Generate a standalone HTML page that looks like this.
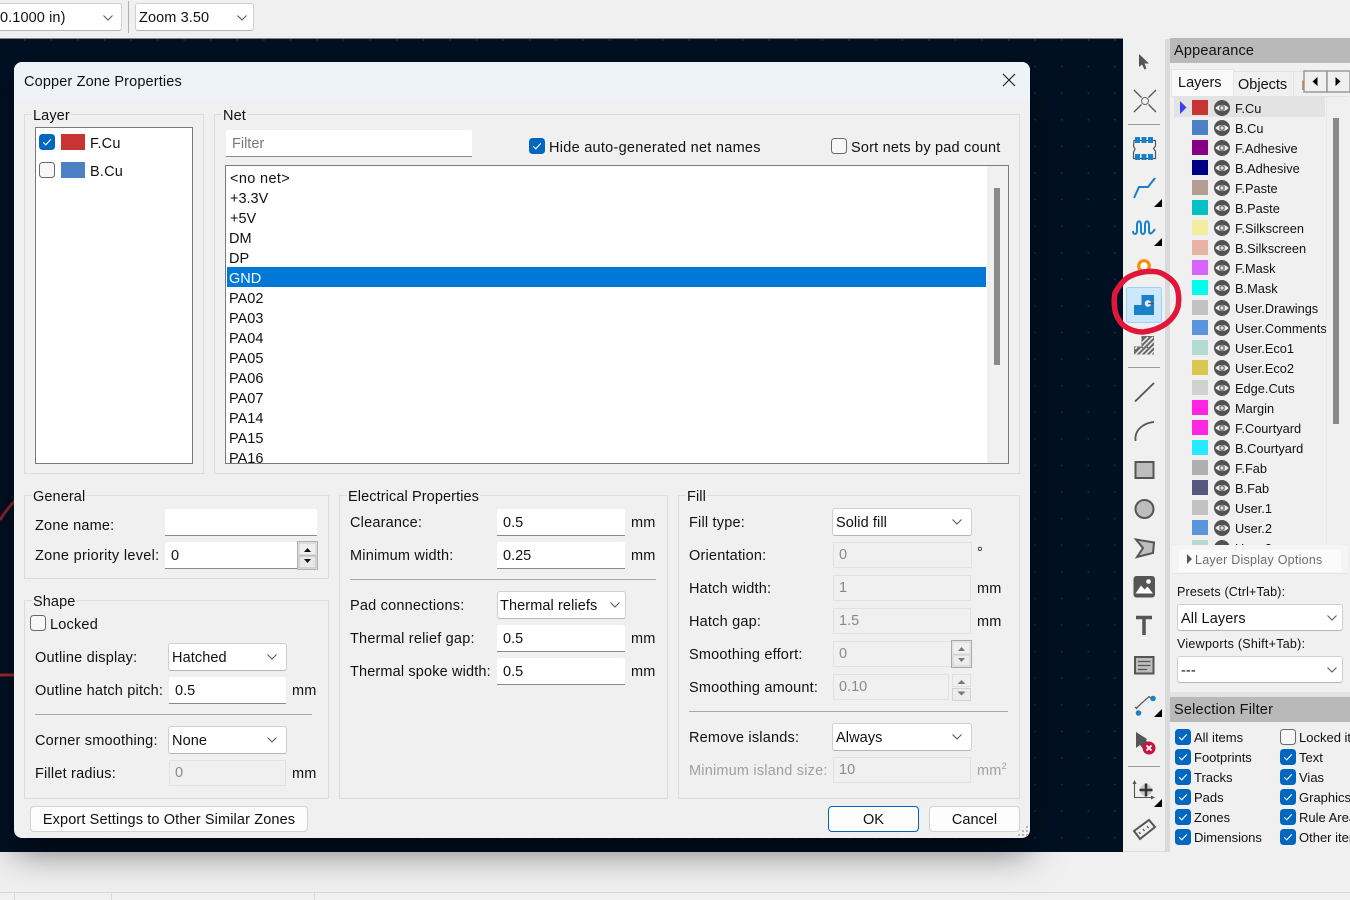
<!DOCTYPE html>
<html><head><meta charset="utf-8"><style>
html,body{margin:0;padding:0;width:1350px;height:900px;overflow:hidden;background:#f0f0f0;font-family:"Liberation Sans",sans-serif;color:#111}
div{box-sizing:border-box}
.a{position:absolute}
.t{position:absolute;white-space:nowrap;line-height:26px;font-size:14.5px;letter-spacing:.2px}
.g{position:absolute;border:1px solid #dcdcdc}
.gl{position:absolute;background:#f0f0f0;padding:0 1px 0 1px;line-height:18px;height:16px;font-size:14.5px;white-space:nowrap;letter-spacing:.1px}
.i{position:absolute;background:#fff;border-bottom:1px solid #8a8a8a;border-radius:2px 2px 0 0;font-size:14.5px;line-height:28px;padding-left:6px;white-space:nowrap}
.d{position:absolute;background:#f0f0f0;border:1px solid #e2e2e2;color:#8a8a8a;font-size:14.5px;line-height:25px;padding-left:5px}
.s{position:absolute;background:#fff;border:1px solid #cfcfcf;border-bottom-color:#b5b5b5;border-radius:3px;font-size:14.5px;line-height:28px;padding-left:3px;white-space:nowrap;letter-spacing:.1px}
.s svg{position:absolute;right:9px;top:10px}
.c{position:absolute;width:16px;height:16px}
.h{position:absolute;height:1px;background:#a8a8a8}
.r{position:absolute;left:1174px;height:20px;width:152px}
.r .w{position:absolute;left:18px;top:3px;width:16px;height:15px}
.r svg{position:absolute;left:40px;top:3px;width:16px;height:16px}
.r span{position:absolute;left:61px;top:0;line-height:23px;font-size:12.8px;white-space:nowrap}
.n{position:absolute;left:229px;font-size:14.5px;line-height:26px;white-space:nowrap}
.f{position:absolute;font-size:13px;line-height:20px;white-space:nowrap}
</style></head><body>
<svg width="0" height="0" style="position:absolute"><defs>
<symbol id="eye" viewBox="0 0 16 16"><circle cx="8" cy="8" r="8" fill="#525252"/><path d="M1.2 8Q8 1.800 14.800 8Q8 14.200 1.200 8Z" fill="#f0f0f0"/><circle cx="8" cy="8" r="3" fill="#7a7a7a"/><circle cx="8" cy="8" r="1.500" fill="#e4e4e4"/></symbol>
<symbol id="on" viewBox="0 0 16 16"><rect width="16" height="16" rx="3.5" fill="#0067c0"/><path d="M4.2 8.3l2.6 2.5 5-5.4" fill="none" stroke="#fff" stroke-width="1.1"/></symbol>
<symbol id="off" viewBox="0 0 16 16"><rect x=".5" y=".5" width="15" height="15" rx="3" fill="#f7f7f7" stroke="#6a6a6a"/></symbol>
<symbol id="chev" viewBox="0 0 10 6"><path d="M.5.5L5 5 9.5.5" fill="none" stroke="#555" stroke-width="1"/></symbol>
</defs></svg>

<!-- top toolbar -->
<div class="a" style="left:0;top:0;width:1350px;height:38px;background:#f0f0f0"></div>
<div class="s" style="left:-7px;top:3px;width:129px;height:28px;padding-left:6px;border-radius:3px">0.1000 in)<svg width="10" height="6" style="right:8px;top:11px"><use href="#chev"/></svg></div>
<div class="a" style="left:128px;top:1px;width:1px;height:32px;background:#b0b0b0"></div>
<div class="s" style="left:135px;top:3px;width:119px;height:28px">Zoom 3.50<svg width="10" height="6" style="right:6px;top:11px"><use href="#chev"/></svg></div>

<!-- canvas -->
<div class="a" style="left:0;top:38px;width:1123px;height:814px;background-color:#001023;border-top:1px solid #888;background-image:radial-gradient(circle at 1px 1px,#202b3a 0.8px,transparent 1px);background-size:26.6px 26.6px;background-position:-3px 0"></div>
<svg class="a" style="left:0;top:480px" width="40" height="210"><path d="M0 40Q8 27 16 20" stroke="#8f2430" stroke-width="3" fill="none"/><path d="M0 195H16" stroke="#a52a32" stroke-width="3" fill="none"/></svg>

<!-- bottom -->
<div class="a" style="left:0;top:892px;width:1350px;height:1px;background:#d8d8d8"></div>
<div class="a" style="left:14px;top:892px;width:1px;height:8px;background:#d8d8d8"></div>
<div class="a" style="left:111px;top:892px;width:1px;height:8px;background:#d8d8d8"></div>
<div class="a" style="left:314px;top:892px;width:1px;height:8px;background:#d8d8d8"></div>

<!-- right toolbar & panels -->
<div class="a" style="left:1123px;top:39px;width:42px;height:813px;background:#f0f0f0"></div>
<div class="a" style="left:1165px;top:39px;width:5px;height:813px;background:#dadada"></div>
<div class="a" style="left:1123px;top:851px;width:47px;height:1px;background:#dcdcdc"></div>

<svg class="a" style="left:1123px;top:39px;overflow:visible" width="47" height="813">
<g transform="translate(-1123,-39)">
<path d="M1139 54L1139 67 1142 64.500 1144.500 69.500 1146.500 68.500 1144.500 63.500 1149 63.500Z" fill="#555"/>
<path d="M1134 90L1141.500 97.500M1148.500 104.500L1156 112M1156 90L1148.500 97.500M1141.500 104.500L1134 112" stroke="#555" stroke-width="1.300"/><circle cx="1145" cy="101" r="3.500" fill="#f0f0f0" stroke="#666"/>
<path d="M1128 124.500H1160" stroke="#999"/>
<path d="M1134 140.500H1155.500V146L1153.500 148.500 1155.500 151V158.500H1133.500V152.500L1135 149 1133.500 146Z" fill="none" stroke="#555" stroke-width="1.200"/>
<path d="M1135 137h5v6h-5zM1141.500 137h5v6h-5zM1148 137h5v6h-5zM1135 154h5v6h-5zM1141.500 154h5v6h-5zM1148 154h5v6h-5z" fill="#1a81c8"/>
<path d="M1134 198L1139 187H1148L1155 178" fill="none" stroke="#1a81c8" stroke-width="2"/>
<path d="M1154 207L1162 199V207Z" fill="#000"/>
<path d="M1133 231C1133 235 1137 235 1137 231V225C1137 220 1141 220 1141 225V231C1141 235 1145 235 1145 231V225C1145 220 1149 220 1149 225V231C1149 235 1152 234 1155 229" fill="none" stroke="#1a81c8" stroke-width="2"/>
<path d="M1154 246L1162 238V246Z" fill="#000"/>
<circle cx="1144" cy="266" r="5.300" fill="#fff" stroke="#f39200" stroke-width="3.200"/>
<rect x="1126.500" y="287.500" width="35" height="35" rx="2" fill="#cce8ff" stroke="#99d1ff"/>
<path d="M1134 315V305H1141.500V295H1154V315Z" fill="#1a81c8"/>
<circle cx="1148" cy="303.500" r="3.200" fill="#e8f4fc"/><path d="M1148 303.500H1154" stroke="#555" stroke-width="1.500"/>
<path d="M1143 272C1150 271 1158 271 1163 274C1170 278 1175 282 1177 288C1179 294 1179 301 1178 307C1176 314 1172 319 1167 323C1160 328 1152 331 1143 332C1135 332 1128 329 1123 325C1119 321 1116 316 1115 310C1114 304 1114 298 1115 293C1118 287 1122 282 1127 278C1132 275 1137 273 1143 272Z" fill="none" stroke="#e0173a" stroke-width="5.500" stroke-linejoin="round"/>
<path d="M1134 354.500V346.500H1141.500V336H1154V354.500Z" fill="#6a6a6a"/>
<path d="M1135 349L1137 347M1135 355L1142 348M1140 355L1147 348M1145 355L1154 346M1150 355L1154 351M1142 343L1148 337M1143 347L1153 337M1148 347L1154 341" stroke="#f0f0f0" stroke-width="1.500"/>
<path d="M1128 367.500H1160" stroke="#999"/>
<path d="M1135 401.500L1154 383" stroke="#555" stroke-width="1.800"/>
<path d="M1135.500 441V437C1136 430 1143 423 1154 422" fill="none" stroke="#555" stroke-width="1.800"/>
<rect x="1135.500" y="462" width="18" height="16" fill="#bdbdbd" stroke="#555" stroke-width="2"/>
<circle cx="1144.500" cy="509" r="9" fill="#bdbdbd" stroke="#555" stroke-width="2"/>
<path d="M1136 539.500L1154 542.500 1153 553 1137 557 1143 548Z" fill="#bdbdbd" stroke="#555" stroke-width="2"/>
<rect x="1133.500" y="576" width="21.500" height="21.500" rx="3" fill="#555"/>
<path d="M1135.500 593.500L1141 585.500 1144.500 589.500 1147.500 586.500 1153 593.500Z" fill="#fff"/><circle cx="1148.500" cy="581.500" r="2.300" fill="#fff"/>
<path d="M1136 617.500H1152M1144 617.500V635" stroke="#555" stroke-width="3.500" fill="none"/>
<rect x="1135" y="657" width="18.500" height="16.500" fill="#bdbdbd" stroke="#555" stroke-width="2"/>
<path d="M1138 661.500H1150.500M1138 665.500H1150.500M1138 669.500H1147" stroke="#555" stroke-width="1.200"/>
<path d="M1135 707L1137 709M1139 711L1141 713M1136.500 708L1149 696.500L1152 699" fill="none" stroke="#555" stroke-width="1.200"/>
<circle cx="1138.500" cy="713" r="2.800" fill="#1a81c8"/><circle cx="1153" cy="698.500" r="2.800" fill="#1a81c8"/>
<path d="M1154 717L1162 709V717Z" fill="#000"/>
<path d="M1136 732L1136 748 1140 745 1144 750 1151 743 1146 741 1147 739Z" fill="#555"/>
<circle cx="1149" cy="748" r="6.500" fill="#c8173e"/><path d="M1146.500 745.500l5 5M1151.500 745.500l-5 5" stroke="#fff" stroke-width="1.800"/>
<path d="M1128 766.500H1160" stroke="#999"/>
<path d="M1134.500 783V797.500H1154" fill="none" stroke="#555" stroke-width="1.100"/><path d="M1134.500 780l-2 4h4zM1155 797.500l-4-2v4z" fill="#555"/>
<circle cx="1146" cy="790" r="6" fill="#c8c8c8"/><path d="M1146 783.500v13M1139.500 790h13" stroke="#333" stroke-width="2.500"/>
<path d="M1154 807L1162 799V807Z" fill="#000"/>
<path d="M1134 831L1149 820 1155 827 1140 839Z" fill="#f0f0f0" stroke="#555" stroke-width="2"/><path d="M1139 832l1.500 2M1143 829l1.500 2M1147 826l1.500 2" stroke="#555" stroke-width="1.200"/>
</g></svg>

<!-- appearance panel -->
<div class="a" style="left:1170px;top:38px;width:180px;height:25px;background:#b9b9b9;font-size:14.5px;line-height:26px;padding-left:4px;letter-spacing:.2px">Appearance</div>
<div class="a" style="left:1171px;top:69px;width:63px;height:27px;background:#f9f9f9;border:1px solid #e4e4e4;border-bottom:0;font-size:14.5px;line-height:26px;padding-left:6px">Layers</div>
<div class="a" style="left:1234px;top:71px;width:60px;height:25px;background:#f0f0f0;border:1px solid #e4e4e4;border-left:0;border-bottom:0;font-size:14.5px;line-height:26px;padding-left:4px">Objects</div>
<div class="a" style="left:1294px;top:71px;width:10px;height:25px;background:#f0f0f0;border-top:1px solid #e4e4e4;color:#c07000;font-size:14px;line-height:26px;padding-left:7px;overflow:hidden">I</div>
<svg class="a" style="left:1303px;top:70px" width="47" height="23"><rect x="1" y="1" width="23" height="21" fill="#f0f0f0" stroke="#9a9a9a" stroke-width="1.500"/><rect x="24" y="1" width="23" height="21" fill="#f0f0f0" stroke="#9a9a9a" stroke-width="1.500"/><path d="M14.500 7v9l-5-4.500zM32.500 7v9l5-4.500z" fill="#000"/></svg>
<div class="a" style="left:1172px;top:96px;width:176px;height:1px;background:#e4e4e4"></div>
<div class="a" style="left:1326px;top:97px;width:1px;height:448px;background:#e8e8e8"></div>
<div class="a" style="left:1333px;top:118px;width:6px;height:306px;background:#8a8a8a"></div>
<div class="a" style="left:1174px;top:97px;width:151px;height:20px;background:#e3e3e3"></div>
<svg class="a" style="left:1180px;top:101px" width="7" height="13"><path d="M0 0L6.500 6.500 0 13Z" fill="#3d3dff"/></svg>

<div class="a" style="left:0;top:0;width:1350px;height:545px;overflow:hidden">
<div class="r" style="top:97px"><div class="w" style="background:#c83434"></div><svg><use href="#eye"/></svg><span>F.Cu</span></div>
<div class="r" style="top:117px"><div class="w" style="background:#4d7fc4"></div><svg><use href="#eye"/></svg><span>B.Cu</span></div>
<div class="r" style="top:137px"><div class="w" style="background:#840084"></div><svg><use href="#eye"/></svg><span>F.Adhesive</span></div>
<div class="r" style="top:157px"><div class="w" style="background:#000084"></div><svg><use href="#eye"/></svg><span>B.Adhesive</span></div>
<div class="r" style="top:177px"><div class="w" style="background:#b29c94"></div><svg><use href="#eye"/></svg><span>F.Paste</span></div>
<div class="r" style="top:197px"><div class="w" style="background:#00c2c2"></div><svg><use href="#eye"/></svg><span>B.Paste</span></div>
<div class="r" style="top:217px"><div class="w" style="background:#f2eda1"></div><svg><use href="#eye"/></svg><span>F.Silkscreen</span></div>
<div class="r" style="top:237px"><div class="w" style="background:#e8b2a7"></div><svg><use href="#eye"/></svg><span>B.Silkscreen</span></div>
<div class="r" style="top:257px"><div class="w" style="background:#d864ff"></div><svg><use href="#eye"/></svg><span>F.Mask</span></div>
<div class="r" style="top:277px"><div class="w" style="background:#02ffee"></div><svg><use href="#eye"/></svg><span>B.Mask</span></div>
<div class="r" style="top:297px"><div class="w" style="background:#c2c2c2"></div><svg><use href="#eye"/></svg><span>User.Drawings</span></div>
<div class="r" style="top:317px;overflow:hidden"><div class="w" style="background:#5994dc"></div><svg><use href="#eye"/></svg><span>User.Comments</span></div>
<div class="r" style="top:337px"><div class="w" style="background:#b4dbd2"></div><svg><use href="#eye"/></svg><span>User.Eco1</span></div>
<div class="r" style="top:357px"><div class="w" style="background:#d8c852"></div><svg><use href="#eye"/></svg><span>User.Eco2</span></div>
<div class="r" style="top:377px"><div class="w" style="background:#d0d2cd"></div><svg><use href="#eye"/></svg><span>Edge.Cuts</span></div>
<div class="r" style="top:397px"><div class="w" style="background:#ff26e2"></div><svg><use href="#eye"/></svg><span>Margin</span></div>
<div class="r" style="top:417px"><div class="w" style="background:#ff26e2"></div><svg><use href="#eye"/></svg><span>F.Courtyard</span></div>
<div class="r" style="top:437px"><div class="w" style="background:#26e9ff"></div><svg><use href="#eye"/></svg><span>B.Courtyard</span></div>
<div class="r" style="top:457px"><div class="w" style="background:#afafaf"></div><svg><use href="#eye"/></svg><span>F.Fab</span></div>
<div class="r" style="top:477px"><div class="w" style="background:#58587f"></div><svg><use href="#eye"/></svg><span>B.Fab</span></div>
<div class="r" style="top:497px"><div class="w" style="background:#c2c2c2"></div><svg><use href="#eye"/></svg><span>User.1</span></div>
<div class="r" style="top:517px"><div class="w" style="background:#5994dc"></div><svg><use href="#eye"/></svg><span>User.2</span></div>
<div class="r" style="top:537px"><div class="w" style="background:#b4dbd2"></div><svg><use href="#eye"/></svg><span>User.3</span></div>
</div>

<div class="a" style="left:1172px;top:545px;width:176px;height:29px;background:#f5f5f5;border-bottom:1px solid #e4e4e4"></div>
<div class="a" style="left:1179px;top:550px;width:162px;height:22px;background:#fbfbfb"></div>
<svg class="a" style="left:1187px;top:554px" width="6" height="10"><path d="M0 0L5 5 0 10Z" fill="#555"/></svg>
<div class="t" style="left:1195px;top:547px;font-size:12.5px;color:#6e6e6e;letter-spacing:.25px">Layer Display Options</div>
<div class="t" style="left:1177px;top:579px;font-size:12.5px;letter-spacing:.2px">Presets (Ctrl+Tab):</div>
<div class="s" style="left:1177px;top:604px;width:166px;height:27px">All Layers<svg width="10" height="6" style="right:5px;top:10px"><use href="#chev"/></svg></div>
<div class="t" style="left:1177px;top:631px;font-size:12.5px;letter-spacing:.27px">Viewports (Shift+Tab):</div>
<div class="s" style="left:1177px;top:656px;width:166px;height:27px">---<svg width="10" height="6" style="right:5px;top:10px"><use href="#chev"/></svg></div>
<div class="a" style="left:1170px;top:692px;width:180px;height:5px;background:#e2e2e2"></div>
<div class="a" style="left:1170px;top:697px;width:180px;height:25px;background:#b9b9b9;font-size:14.5px;line-height:26px;padding-left:4px;letter-spacing:.2px">Selection Filter</div>

<svg class="c" style="left:1175px;top:729px"><use href="#on"/></svg><div class="f" style="left:1194px;top:728px">All items</div>
<svg class="c" style="left:1175px;top:749px"><use href="#on"/></svg><div class="f" style="left:1194px;top:748px">Footprints</div>
<svg class="c" style="left:1175px;top:769px"><use href="#on"/></svg><div class="f" style="left:1194px;top:768px">Tracks</div>
<svg class="c" style="left:1175px;top:789px"><use href="#on"/></svg><div class="f" style="left:1194px;top:788px">Pads</div>
<svg class="c" style="left:1175px;top:809px"><use href="#on"/></svg><div class="f" style="left:1194px;top:808px">Zones</div>
<svg class="c" style="left:1175px;top:829px"><use href="#on"/></svg><div class="f" style="left:1194px;top:828px">Dimensions</div>
<svg class="c" style="left:1280px;top:729px"><use href="#off"/></svg><div class="f" style="left:1299px;top:728px">Locked items</div>
<svg class="c" style="left:1280px;top:749px"><use href="#on"/></svg><div class="f" style="left:1299px;top:748px">Text</div>
<svg class="c" style="left:1280px;top:769px"><use href="#on"/></svg><div class="f" style="left:1299px;top:768px">Vias</div>
<svg class="c" style="left:1280px;top:789px"><use href="#on"/></svg><div class="f" style="left:1299px;top:788px">Graphics</div>
<svg class="c" style="left:1280px;top:809px"><use href="#on"/></svg><div class="f" style="left:1299px;top:808px">Rule Areas</div>
<svg class="c" style="left:1280px;top:829px"><use href="#on"/></svg><div class="f" style="left:1299px;top:828px">Other items</div>

<!-- dialog -->
<div class="a" style="left:14px;top:62px;width:1016px;height:776px;background:#f0f0f0;border-radius:8px;box-shadow:0 14px 36px rgba(0,0,0,.5);overflow:hidden">
<div class="a" style="left:0;top:0;width:1016px;height:37px;background:#eef3f9"></div>
</div>
<div class="t" style="left:24px;top:69px;letter-spacing:.14px">Copper Zone Properties</div>
<svg class="a" style="left:1002px;top:73px" width="14" height="14"><path d="M1 1L13 13M13 1L1 13" stroke="#222" stroke-width="1.200"/></svg>

<!-- layer -->
<div class="g" style="left:24px;top:114px;width:180px;height:360px"></div>
<div class="gl" style="left:32px;top:107px">Layer</div>
<div class="a" style="left:35px;top:127px;width:158px;height:337px;background:#fff;border:1px solid #7a7a7a"></div>
<svg class="c" style="left:39px;top:134px"><use href="#on"/></svg>
<div class="a" style="left:61px;top:134px;width:24px;height:16px;background:#c83434"></div>
<div class="t" style="left:90px;top:131px">F.Cu</div>
<svg class="c" style="left:39px;top:162px"><use href="#off"/></svg>
<div class="a" style="left:61px;top:162px;width:24px;height:16px;background:#4d7fc4"></div>
<div class="t" style="left:90px;top:159px">B.Cu</div>

<!-- net -->
<div class="g" style="left:214px;top:114px;width:806px;height:360px"></div>
<div class="gl" style="left:222px;top:107px">Net</div>
<div class="i" style="left:226px;top:130px;width:246px;height:27px;color:#777">Filter</div>
<svg class="c" style="left:529px;top:138px"><use href="#on"/></svg>
<div class="t" style="left:549px;top:135px;letter-spacing:.27px">Hide auto-generated net names</div>
<svg class="c" style="left:831px;top:138px"><use href="#off"/></svg>
<div class="t" style="left:851px;top:135px">Sort nets by pad count</div>
<div class="a" style="left:225px;top:165px;width:784px;height:299px;background:#fff;border:1px solid #7a7a7a;overflow:hidden"></div>
<div class="a" style="left:227px;top:267px;width:759px;height:20px;background:#0078d7"></div>
<div class="a" style="left:987px;top:166px;width:21px;height:297px;background:#f0f0f0"></div>
<div class="a" style="left:994px;top:188px;width:6px;height:177px;background:#8a8a8a"></div>
<div class="a" style="left:226px;top:166px;width:760px;height:297px;overflow:hidden">
<div class="n" style="left:4px;top:0;letter-spacing:.35px">&lt;no net&gt;</div>
<div class="n" style="left:4px;top:20px">+3.3V</div>
<div class="n" style="left:4px;top:40px">+5V</div>
<div class="n" style="left:3px;top:60px">DM</div>
<div class="n" style="left:3px;top:80px">DP</div>
<div class="n" style="left:3px;top:100px;color:#fff">GND</div>
<div class="n" style="left:3px;top:120px">PA02</div>
<div class="n" style="left:3px;top:140px">PA03</div>
<div class="n" style="left:3px;top:160px">PA04</div>
<div class="n" style="left:3px;top:180px">PA05</div>
<div class="n" style="left:3px;top:200px">PA06</div>
<div class="n" style="left:3px;top:220px">PA07</div>
<div class="n" style="left:3px;top:240px">PA14</div>
<div class="n" style="left:3px;top:260px">PA15</div>
<div class="n" style="left:3px;top:280px">PA16</div>
</div>

<!-- general -->
<div class="g" style="left:24px;top:495px;width:305px;height:84px"></div>
<div class="gl" style="left:32px;top:488px">General</div>
<div class="t" style="left:35px;top:513px">Zone name:</div>
<div class="i" style="left:165px;top:509px;width:152px;height:27px"></div>
<div class="t" style="left:35px;top:543px;letter-spacing:.3px">Zone priority level:</div>
<div class="i" style="left:165px;top:542px;width:133px;height:27px">0</div>
<svg class="a" style="left:297px;top:541px" width="21" height="29"><rect x=".5" y=".5" width="20" height="28" fill="#f0f0f0" stroke="#b0b0b0"/><rect x="2" y="2" width="17" height="12" fill="#f0f0f0" stroke="#c8c8c8"/><rect x="2" y="15" width="17" height="12" fill="#e8e8e8" stroke="#b8b8b8"/><path d="M7 11l3.500-4 3.500 4zM7 18l3.500 4 3.500-4z" fill="#111"/></svg>

<!-- shape -->
<div class="g" style="left:24px;top:600px;width:305px;height:199px"></div>
<div class="gl" style="left:32px;top:593px">Shape</div>
<svg class="c" style="left:30px;top:615px"><use href="#off"/></svg>
<div class="t" style="left:50px;top:612px">Locked</div>
<div class="t" style="left:35px;top:645px">Outline display:</div>
<div class="s" style="left:168px;top:643px;width:119px;height:28px">Hatched<svg width="10" height="6"><use href="#chev"/></svg></div>
<div class="t" style="left:35px;top:678px">Outline hatch pitch:</div>
<div class="i" style="left:169px;top:677px;width:117px;height:27px">0.5</div>
<div class="t" style="left:292px;top:678px">mm</div>
<div class="h" style="left:35px;top:714px;width:277px"></div>
<div class="t" style="left:35px;top:728px">Corner smoothing:</div>
<div class="s" style="left:168px;top:726px;width:119px;height:28px">None<svg width="10" height="6"><use href="#chev"/></svg></div>
<div class="t" style="left:35px;top:761px">Fillet radius:</div>
<div class="d" style="left:169px;top:760px;width:117px;height:26px">0</div>
<div class="t" style="left:292px;top:761px">mm</div>

<!-- electrical -->
<div class="g" style="left:339px;top:495px;width:329px;height:304px"></div>
<div class="gl" style="left:347px;top:488px">Electrical Properties</div>
<div class="t" style="left:350px;top:510px">Clearance:</div>
<div class="i" style="left:497px;top:509px;width:128px;height:27px">0.5</div>
<div class="t" style="left:631px;top:510px">mm</div>
<div class="t" style="left:350px;top:543px">Minimum width:</div>
<div class="i" style="left:497px;top:542px;width:128px;height:27px">0.25</div>
<div class="t" style="left:631px;top:543px">mm</div>
<div class="h" style="left:350px;top:579px;width:306px"></div>
<div class="t" style="left:350px;top:593px">Pad connections:</div>
<div class="s" style="left:497px;top:591px;width:129px;height:28px;padding-left:2px">Thermal reliefs<svg width="10" height="6" style="right:5px"><use href="#chev"/></svg></div>
<div class="t" style="left:350px;top:626px">Thermal relief gap:</div>
<div class="i" style="left:497px;top:625px;width:128px;height:27px">0.5</div>
<div class="t" style="left:631px;top:626px">mm</div>
<div class="t" style="left:350px;top:659px;letter-spacing:.15px">Thermal spoke width:</div>
<div class="i" style="left:497px;top:658px;width:128px;height:27px">0.5</div>
<div class="t" style="left:631px;top:659px">mm</div>

<!-- fill -->
<div class="g" style="left:678px;top:495px;width:342px;height:304px"></div>
<div class="gl" style="left:686px;top:488px">Fill</div>
<div class="t" style="left:689px;top:510px">Fill type:</div>
<div class="s" style="left:832px;top:508px;width:140px;height:28px">Solid fill<svg width="10" height="6"><use href="#chev"/></svg></div>
<div class="t" style="left:689px;top:543px">Orientation:</div>
<div class="d" style="left:833px;top:542px;width:139px;height:26px">0</div>
<div class="t" style="left:977px;top:540px">°</div>
<div class="t" style="left:689px;top:576px">Hatch width:</div>
<div class="d" style="left:833px;top:575px;width:138px;height:26px">1</div>
<div class="t" style="left:977px;top:576px">mm</div>
<div class="t" style="left:689px;top:609px">Hatch gap:</div>
<div class="d" style="left:833px;top:608px;width:138px;height:26px">1.5</div>
<div class="t" style="left:977px;top:609px">mm</div>
<div class="t" style="left:689px;top:642px">Smoothing effort:</div>
<div class="d" style="left:833px;top:641px;width:119px;height:26px">0</div>
<svg class="a" style="left:951px;top:640px" width="21" height="28"><rect x=".5" y=".5" width="20" height="27" fill="#f0f0f0" stroke="#a8a8a8"/><rect x="2" y="2" width="17" height="12" fill="#f0f0f0" stroke="#d8d8d8"/><rect x="2" y="15" width="17" height="11" fill="#ececec" stroke="#d0d0d0"/><path d="M7 11l3.500-4 3.500 4zM7 18l3.500 4 3.500-4z" fill="#777"/></svg>
<div class="t" style="left:689px;top:675px">Smoothing amount:</div>
<div class="d" style="left:833px;top:674px;width:116px;height:26px">0.10</div>
<svg class="a" style="left:952px;top:674px" width="19" height="27"><rect x=".5" y=".5" width="18" height="12" fill="#f0f0f0" stroke="#e0e0e0"/><rect x=".5" y="14.500" width="18" height="12" fill="#ececec" stroke="#d4d4d4"/><path d="M5.500 10l4-4 4 4zM5.500 17.500l4 4 4-4z" fill="#777"/></svg>
<div class="h" style="left:689px;top:711px;width:319px"></div>
<div class="t" style="left:689px;top:725px">Remove islands:</div>
<div class="s" style="left:832px;top:723px;width:140px;height:28px">Always<svg width="10" height="6"><use href="#chev"/></svg></div>
<div class="t" style="left:689px;top:758px;color:#a0a0a0">Minimum island size:</div>
<div class="d" style="left:833px;top:757px;width:138px;height:26px">10</div>
<div class="t" style="left:977px;top:758px;color:#a0a0a0">mm<sup style="font-size:9px;line-height:0">2</sup></div>

<!-- buttons -->
<div class="a" style="left:30px;top:806px;width:278px;height:26px;background:#fdfdfd;border:1px solid #d2d2d2;border-radius:4px;text-align:center;font-size:14.5px;line-height:26px;white-space:nowrap;letter-spacing:.13px">Export Settings to Other Similar Zones</div>
<div class="a" style="left:828px;top:806px;width:91px;height:26px;background:#fdfdfd;border:1px solid #0067c0;border-radius:4px;text-align:center;font-size:14.5px;line-height:26px">OK</div>
<div class="a" style="left:929px;top:806px;width:91px;height:26px;background:#fdfdfd;border:1px solid #d2d2d2;border-radius:4px;text-align:center;font-size:14.5px;line-height:26px">Cancel</div>
<svg class="a" style="left:1018px;top:825px" width="12" height="12"><path d="M8 1h2v2H8zM4 5h2v2H4zM8 5h2v2H8zM0 9h2v2H0zM4 9h2v2H4zM8 9h2v2H8z" fill="#b8b8b8"/></svg>
</body></html>
